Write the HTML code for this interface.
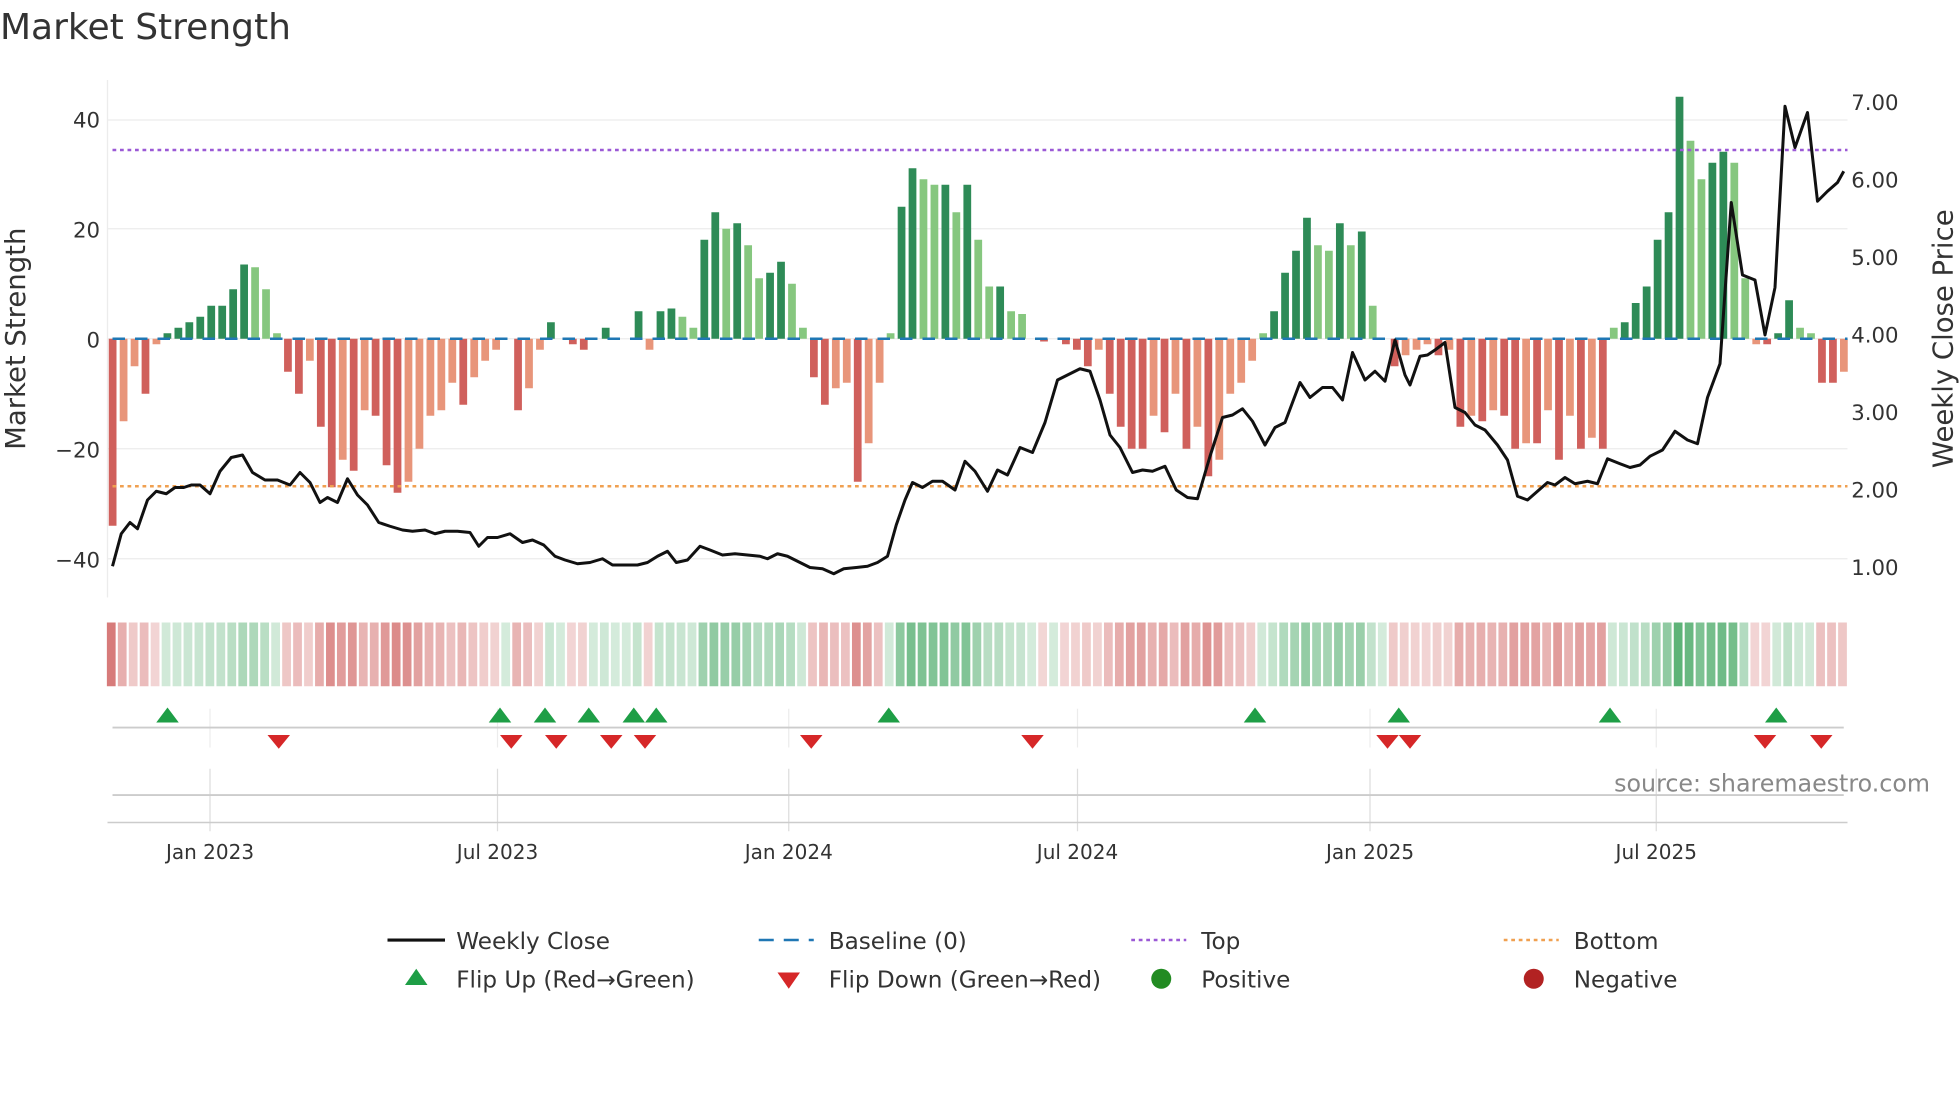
<!DOCTYPE html>
<html><head><meta charset="utf-8"><style>
html,body{margin:0;padding:0;background:#fff;width:1960px;height:1102px;overflow:hidden}
svg{display:block;font-family:"DejaVu Sans","Liberation Sans",sans-serif}
</style></head><body>
<svg id="s" width="1960" height="1102" viewBox="0 0 1568 881.6" xmlns="http://www.w3.org/2000/svg">
<text x="0" y="31" font-size="28.8" fill="#333">Market Strength</text>
<g id="grid" stroke="#ececec" stroke-width="1"></g>
<g id="bars"></g>
<g id="heat"></g>
<line x1="90" y1="120" x2="1478" y2="120" stroke="#9b59d6" stroke-width="2" stroke-dasharray="3,3"/>
<line x1="90" y1="389" x2="1478" y2="389" stroke="#f0a050" stroke-width="2" stroke-dasharray="3,3"/>
<line x1="90" y1="271" x2="1478" y2="271" stroke="#1f77b4" stroke-width="2" stroke-dasharray="10,8"/>
<polyline id="price" fill="none" stroke="#111" stroke-width="2.4" stroke-linejoin="round"/>
<g font-size="17" fill="#333" text-anchor="end">
<text x="80" y="102">40</text><text x="80" y="190">20</text><text x="80" y="278">0</text><text x="80" y="366">−20</text><text x="80" y="454">−40</text>
</g>
<g font-size="17" fill="#333">
<text x="1481" y="88">7.00</text><text x="1481" y="150">6.00</text><text x="1481" y="212">5.00</text><text x="1481" y="274">4.00</text><text x="1481" y="336">3.00</text><text x="1481" y="398">2.00</text><text x="1481" y="460">1.00</text>
</g>
<text transform="translate(20,271) rotate(-90)" font-size="22" fill="#333" text-anchor="middle">Market Strength</text>
<text transform="translate(1562,271) rotate(-90)" font-size="22" fill="#333" text-anchor="middle">Weekly Close Price</text>
<line x1="90" y1="582" x2="1475" y2="582" stroke="#ccc" stroke-width="1.5"/>
<line x1="90" y1="636" x2="1475" y2="636" stroke="#ccc" stroke-width="1.5"/>
<line x1="86" y1="658" x2="1478" y2="658" stroke="#ccc" stroke-width="1.2"/>
<g id="marks"></g>
<text x="1544" y="633" font-size="19" fill="#888" text-anchor="end">source: sharemaestro.com</text>
<g font-size="16" fill="#333" text-anchor="middle">
<text x="168" y="687">Jan 2023</text><text x="398" y="687">Jul 2023</text><text x="631" y="687">Jan 2024</text><text x="862" y="687">Jul 2024</text><text x="1096" y="687">Jan 2025</text><text x="1325" y="687">Jul 2025</text>
</g>
<g font-size="18.5" fill="#333">
<line x1="310" y1="752" x2="356" y2="752" stroke="#111" stroke-width="2.5"/><text x="365" y="759">Weekly Close</text>
<line x1="607" y1="752" x2="651" y2="752" stroke="#1f77b4" stroke-width="2" stroke-dasharray="12,8"/><text x="663" y="759">Baseline (0)</text>
<line x1="905" y1="752" x2="949" y2="752" stroke="#9b59d6" stroke-width="2" stroke-dasharray="3,3"/><text x="961" y="759">Top</text>
<line x1="1203" y1="752" x2="1247" y2="752" stroke="#f0a050" stroke-width="2" stroke-dasharray="3,3"/><text x="1259" y="759">Bottom</text>
<polygon points="324,788 342,788 333,775" fill="#1e9e46"/><text x="365" y="790">Flip Up (Red→Green)</text>
<polygon points="622,778 640,778 631,791" fill="#d62728"/><text x="663" y="790">Flip Down (Green→Red)</text>
<circle cx="929" cy="783" r="8" fill="#228b22"/><text x="961" y="790">Positive</text>
<circle cx="1227" cy="783" r="8" fill="#b22222"/><text x="1259" y="790">Negative</text>
</g>
</svg>
<script>
var NS="http://www.w3.org/2000/svg";
function el(p,t,a){var e=document.createElementNS(NS,t);for(var k in a)e.setAttribute(k,a[k]);document.getElementById(p).appendChild(e);return e;}
[96,183,271,359,447].forEach(function(y){el("grid","line",{x1:86,x2:1478,y1:y,y2:y});});
el("grid","line",{x1:86,x2:86,y1:64,y2:478});
[168,398,631,862,1096,1325].forEach(function(x){el("grid","line",{x1:x,x2:x,y1:567,y2:598});el("grid","line",{x1:x,x2:x,y1:615,y2:665,stroke:"#ddd"});});
var v=[-34,-15,-5,-10,-1,1,2,3,4,6,6,9,13.5,13,9,1,-6,-10,-4,-16,-27,-22,-24,-13,-14,-23,-28,-26,-20,-14,-13,-8,-12,-7,-4,-2,0,-13,-9,-2,3,0,-1,-2,0,2,0,0,5,-2,5,5.5,4,2,18,23,20,21,17,11,12,14,10,2,-7,-12,-9,-8,-26,-19,-8,1,24,31,29,28,28,23,28,18,9.5,9.5,5,4.5,0,-0.5,0,-1,-2,-5,-2,-10,-16,-20,-20,-14,-17,-10,-20,-16,-25,-22,-10,-8,-4,1,5,12,16,22,17,16,21,17,19.5,6,0,-5,-3,-2,-1,-3,-2,-16,-14,-15,-13,-14,-20,-19,-19,-13,-22,-14,-20,-18,-20,2,3,6.5,9.5,18,23,44,36,29,32,34,32,11,-1,-1,1,7,2,1,-8,-8,-6];
var n=v.length, dx=(1475-90)/(n-1);
for(var i=0;i<n;i++){var x=90+i*dx,a=v[i],dark=i==0||Math.abs(a)>=Math.abs(v[i-1]);
 var c=a>=0?(dark?"#2e8b57":"#86c77f"):(dark?"#d0605c":"#e8957a");
 if(a!==0){var y0=271,y1=271-a*4.4;el("bars","rect",{x:x-3,y:Math.min(y0,y1),width:6.2,height:Math.abs(y1-y0),fill:c});}
 var op=0.22+0.6*Math.min(Math.abs(a)/40,1);
 el("heat","rect",{x:x-4.5,y:498,width:7,height:51,fill:a>=0?"#3aa25a":"#c84a48","fill-opacity":op});
}
var p="90,453 97,427 104,418 110,423 118,400 125,393 133,395 140,390 147,390 153,388 160,388 168,395 176,377 185,366 194,364 202,378 212,384 222,384 232,388 240,378 248,386 256,402 262,398 270,402 278,383 286,396 294,404 303,418 312,421 322,424 330,425 340,424 348,427 356,425 366,425 376,426 383,437 390,430 398,430 408,427 418,434 426,432 435,436 444,445 452,448 462,451 472,450 482,447 490,452 500,452 510,452 518,450 526,445 534,441 541,450 550,448 560,437 568,440 578,444 588,443 598,444 608,445 614,447 622,443 630,445 640,450 648,454 658,455 667,459 675,455 685,454 694,453 702,450 710,445 717,420 724,400 730,386 738,390 746,385 754,385 764,392 772,369 780,377 790,393 798,376 806,380 816,358 826,362 836,338 846,304 856,299 864,295 872,297 880,320 888,348 896,358 906,378 914,376 922,377 932,373 941,392 950,398 958,399 968,365 978,334 986,332 994,327 1002,337 1012,356 1020,342 1028,338 1040,306 1048,318 1058,310 1066,310 1074,320 1082,282 1092,304 1100,297 1108,305 1116,272 1124,300 1128,308 1136,285 1142,284 1148,280 1156,274 1164,326 1172,330 1180,340 1188,344 1198,356 1206,368 1214,397 1222,400 1230,393 1238,386 1244,388 1252,382 1260,387 1270,385 1278,387 1286,367 1296,371 1304,374 1312,372 1320,365 1330,360 1340,345 1350,352 1358,355 1366,318 1376,291 1385,162 1394,220 1404,224 1412,268 1420,230 1428,85 1436,118 1446,90 1454,161 1462,153 1470,146 1475,137";
document.getElementById("price").setAttribute("points",p);
[134,400,436,471,507,525,711,1004,1119,1288,1421].forEach(function(x){el("marks","polygon",{points:(x-9)+",578 "+(x+9)+",578 "+x+",566",fill:"#1e9e46"});});
[223,409,445,489,516,649,826,1110,1128,1412,1457].forEach(function(x){el("marks","polygon",{points:(x-9)+",588 "+(x+9)+",588 "+x+",599",fill:"#d62728"});});
</script>
</body></html>
